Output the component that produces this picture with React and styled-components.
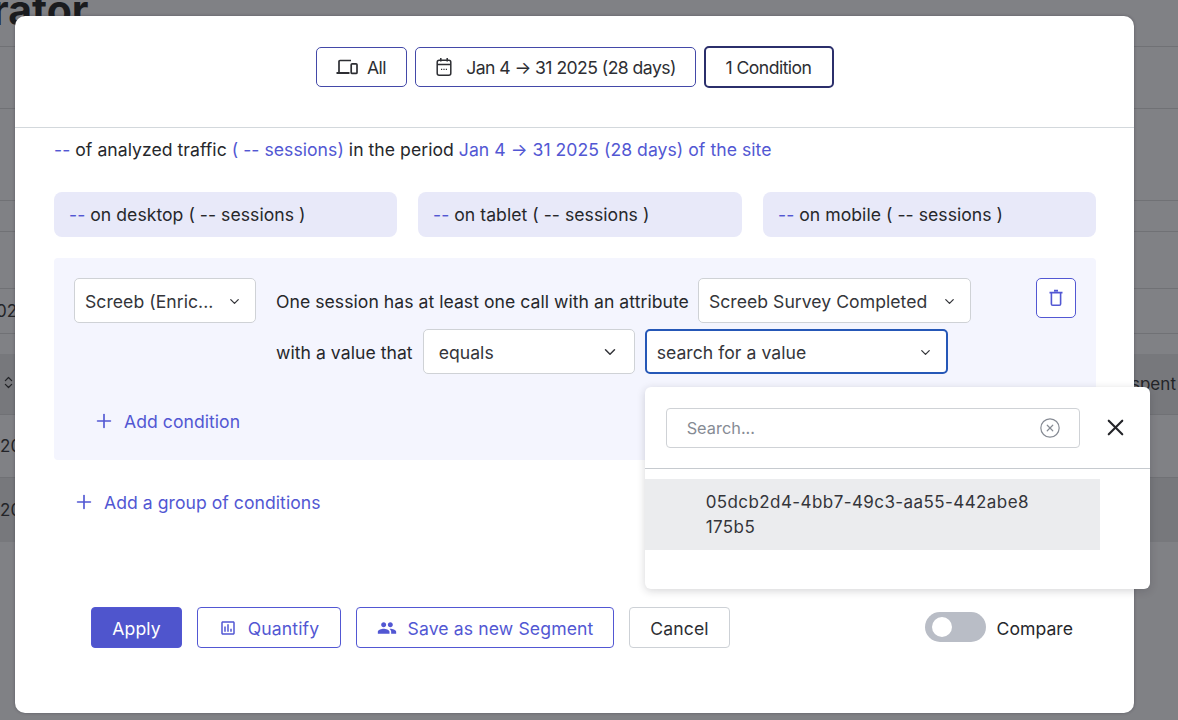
import React from "react";
import styled, { createGlobalStyle } from "styled-components";
import { ChevronDown, ChevronsUpDown, CircleX, Plus, X } from "lucide-react";
import { MdOutlineAssessment, MdPeople } from "react-icons/md";

const Global = createGlobalStyle`
  html, body {
    margin: 0;
    height: 100%;
    overflow: hidden;
    background: #808185;
    font-family: Inter, "Liberation Sans", sans-serif;
    font-size: 17.6px;
    letter-spacing: 0.04px;
    color: #26272b;
  }
  * { box-sizing: border-box; }
`;

const Page = styled.div`
  position: relative;
  width: 1178px;
  height: 720px;
  overflow: hidden;
  background: #808185;
`;

const Backdrop = styled.div`
  display: flex;
  flex-direction: column;
  height: 100%;
`;

const BackRow = styled.div`
  height: ${(p) => p.$h}px;
  flex: none;
  display: flex;
  align-items: center;
  justify-content: space-between;
  background: ${(p) => (p.$dark ? "#77787c" : "transparent")};
  border-bottom: ${(p) => (p.$plain ? "none" : "1px solid #707175")};
  font-size: 17px;
  color: #232428;
  overflow: hidden;
  white-space: nowrap;
`;

const PageTitle = styled.div`
  font-size: 41px;
  font-weight: 700;
  line-height: 1;
  margin-left: -8px;
  margin-top: -26px;
  color: #1a1b1e;
`;

const ClippedCell = styled.span`
  margin-left: ${(p) => p.$left || 0}px;
  margin-right: ${(p) => p.$right || 0}px;
`;

const Modal = styled.div`
  position: absolute;
  left: 15px;
  top: 16px;
  width: 1119px;
  height: 697px;
  background: #fff;
  border-radius: 10px;
  box-shadow: 0 0 3px rgba(40, 40, 50, 0.45);
  display: flex;
  flex-direction: column;
`;

const ModalHead = styled.div`
  height: 112px;
  flex: none;
  display: flex;
  justify-content: center;
  gap: 8px;
  padding-top: 31px;
  border-bottom: 1.5px solid #d3d8dc;
`;

const TopButton = styled.div`
  height: ${(p) => (p.$active ? 42 : 40)}px;
  margin-top: ${(p) => (p.$active ? -1 : 0)}px;
  width: ${(p) => p.$w}px;
  display: flex;
  align-items: center;
  justify-content: center;
  gap: ${(p) => p.$gap || 9}px;
  background: #fff;
  border: ${(p) => (p.$active ? "2px solid #2b2f6b" : "1px solid #4349a8")};
  border-radius: 5px;
  font-size: 17.6px;
  letter-spacing: -0.55px;
  color: #2d2e33;
`;

const ModalBody = styled.div`
  flex: 1;
  padding: 10px 38px 0 39px;
  display: flex;
  flex-direction: column;
`;

const Summary = styled.div`
  height: 24px;
  line-height: 24px;
  white-space: nowrap;
`;

const Accent = styled.span`
  color: #5257d3;
`;

const Devices = styled.div`
  display: grid;
  grid-template-columns: 343px 324px 333px;
  gap: 21px;
  margin-top: 30px;
`;

const DeviceCard = styled.div`
  height: 45px;
  display: flex;
  align-items: center;
  padding-left: 15px;
  background: #e8e9f9;
  border-radius: 8px;
  white-space: pre;
`;

const GroupPanel = styled.div`
  position: relative;
  height: 202px;
  margin-top: 21px;
  padding: 20px 20px 0;
  background: #f4f5fe;
  border-radius: 4px;
`;

const ConditionRow = styled.div`
  display: flex;
  align-items: flex-start;
`;

const ConditionLines = styled.div`
  display: flex;
  flex-direction: column;
  gap: 6px;
  margin-left: 20px;
`;

const ConditionLine = styled.div`
  display: flex;
  align-items: center;
  height: 45px;
  white-space: nowrap;
`;

const Select = styled.div`
  position: relative;
  flex: none;
  width: ${(p) => p.$w}px;
  height: 45px;
  display: flex;
  align-items: center;
  justify-content: space-between;
  padding: 1px ${(p) => p.$right || 13}px 0 ${(p) => p.$left || 10}px;
  margin-left: ${(p) => p.$gap || 0}px;
  background: #fff;
  border: ${(p) => (p.$focus ? "2px solid #2557b7" : "1px solid #cfd2d6")};
  border-radius: 5px;
  color: #34353a;
  white-space: nowrap;
`;

const LineLabel = styled.span`
  padding-top: 2px;
`;

const TrashButton = styled.div`
  flex: none;
  width: 40px;
  height: 40px;
  margin-left: 65px;
  display: flex;
  align-items: center;
  justify-content: center;
  background: #fff;
  border: 1px solid #5257d3;
  border-radius: 5px;
  color: #5257d3;
`;

const AddLink = styled.div`
  display: flex;
  align-items: center;
  gap: 9px;
  margin: ${(p) => p.$margin};
  height: 24px;
  color: #5257d3;
`;

const Footer = styled.div`
  display: flex;
  align-items: center;
  gap: 15px;
  margin-top: 93px;
  padding-left: 37px;
  padding-right: 23px;
`;

const ActionButton = styled.div`
  width: ${(p) => p.$w}px;
  height: 41px;
  display: flex;
  align-items: center;
  justify-content: center;
  gap: 11px;
  padding-top: 1px;
  border-radius: 4px;
  background: ${(p) => (p.$primary ? "#4f55cd" : "#fff")};
  color: ${(p) => (p.$primary ? "#fff" : p.$muted ? "#2d2e33" : "#5257d3")};
  border: 1px solid ${(p) => (p.$muted ? "#cdd1d6" : "#5257d3")};
  letter-spacing: 0.12px;
`;

const CompareWrap = styled.div`
  margin-left: auto;
  display: flex;
  align-items: center;
  gap: 10px;
  padding-top: 1px;
`;

const Toggle = styled.div`
  width: 61px;
  height: 30px;
  margin-bottom: 3px;
  border-radius: 15px;
  background: #b9bdc6;
  padding: 5px 0 0 7px;
`;

const ToggleKnob = styled.div`
  width: 20px;
  height: 20px;
  border-radius: 50%;
  background: #fff;
`;

const Popover = styled.div`
  position: absolute;
  left: -2px;
  top: 56px;
  width: 505px;
  height: 202px;
  background: #fff;
  border-radius: 6px;
  box-shadow: 0 2px 8px rgba(30, 30, 40, 0.18);
  z-index: 2;
  white-space: normal;
`;

const SearchBar = styled.div`
  height: 82px;
  display: flex;
  align-items: center;
  padding-left: 21px;
  border-bottom: 1px solid #c6cacf;
  color: #232428;
`;

const SearchBox = styled.div`
  width: 414px;
  height: 40px;
  display: flex;
  align-items: center;
  justify-content: space-between;
  padding: 0 18px 0 20px;
  border: 1px solid #cfd2d6;
  border-radius: 4px;
  margin-right: 22px;
  font-size: 16.3px;
  color: #868b94;
`;

const Option = styled.div`
  width: 455px;
  height: 71px;
  margin-top: 10px;
  padding: 11px 66px 0 61px;
  background: #ebecee;
  font-size: 17px;
  line-height: 25px;
  letter-spacing: 0.42px;
  word-break: break-all;
  color: #34353a;
`;

const Icon = styled.svg`
  flex: none;
  display: block;
`;

const DevicesIcon = () => (
  <Icon width="22" height="16" viewBox="0 0 22 16" fill="none" stroke="currentColor" strokeWidth="1.7">
    <path d="M15 1.5H4a1 1 0 0 0-1 1V13" />
    <path d="M0.5 14h13" strokeWidth="2" />
    <rect x="15.2" y="4.8" width="5.8" height="9.6" rx="1" />
  </Icon>
);

const CalendarIcon = () => (
  <Icon width="20" height="20" viewBox="0 0 20 20" fill="none" stroke="currentColor" strokeWidth="1.5">
    <rect x="3.2" y="3.2" width="13.6" height="15" rx="2" />
    <path d="M3.2 7.6h13.6M6.8 1v3.6M13.2 1v3.6" />
    <path d="M7 12.4h1.2M9.4 12.4h1.2M11.8 12.4h1.2" strokeWidth="1.2" />
  </Icon>
);

const TrashIcon = () => (
  <Icon width="20" height="20" viewBox="0 0 20 20" fill="none" stroke="currentColor" strokeWidth="1.6">
    <path d="M5.4 5v11a1.3 1.3 0 0 0 1.3 1.3h6.6a1.3 1.3 0 0 0 1.3-1.3V5" />
    <path d="M3.5 4.6h13M8 2.6h4" />
  </Icon>
);

export default function App() {
  return (
    <Page>
      <Global />
      <Backdrop>
        <BackRow $h={47}>
          <PageTitle>rator</PageTitle>
        </BackRow>
        <BackRow $h={62} />
        <BackRow $h={92} />
        <BackRow $h={31} />
        <BackRow $h={57} />
        <BackRow $h={45}>
          <ClippedCell $left={-4}>02</ClippedCell>
        </BackRow>
        <BackRow $h={20} $plain />
        <BackRow $h={61} $dark>
          <ClippedCell $left={1}>
            <ChevronsUpDown size={15} />
          </ClippedCell>
          <ClippedCell $right={2}>spent</ClippedCell>
        </BackRow>
        <BackRow $h={63}>
          <ClippedCell>20</ClippedCell>
        </BackRow>
        <BackRow $h={64} $dark $plain>
          <ClippedCell>20</ClippedCell>
        </BackRow>
      </Backdrop>

      <Modal>
        <ModalHead>
          <TopButton $w={91}>
            <DevicesIcon />
            All
          </TopButton>
          <TopButton $w={281} $gap={12}>
            <CalendarIcon />
            Jan 4 → 31 2025 (28 days)
          </TopButton>
          <TopButton $w={130} $active>
            1 Condition
          </TopButton>
        </ModalHead>

        <ModalBody>
          <Summary>
            <Accent>--</Accent> of analyzed traffic <Accent>( -- sessions)</Accent> in the period{" "}
            <Accent>Jan 4 → 31 2025 (28 days) of the site</Accent>
          </Summary>

          <Devices>
            <DeviceCard>
              <Accent>--</Accent> on desktop ( -- sessions )
            </DeviceCard>
            <DeviceCard>
              <Accent>--</Accent> on tablet ( -- sessions )
            </DeviceCard>
            <DeviceCard>
              <Accent>--</Accent> on mobile ( -- sessions )
            </DeviceCard>
          </Devices>

          <GroupPanel>
            <ConditionRow>
              <Select $w={182}>
                Screeb (Enric...
                <ChevronDown size={15} strokeWidth={2} />
              </Select>
              <ConditionLines>
                <ConditionLine>
                  <LineLabel>One session has at least one call with an attribute</LineLabel>
                  <Select $w={273} $gap={9}>
                    Screeb Survey Completed
                    <ChevronDown size={15} strokeWidth={2} />
                  </Select>
                </ConditionLine>
                <ConditionLine>
                  <LineLabel>with a value that</LineLabel>
                  <Select $w={212} $gap={10} $left={15} $right={15}>
                    equals
                    <ChevronDown size={18} strokeWidth={2} />
                  </Select>
                  <Select $w={303} $gap={10} $focus>
                    search for a value
                    <ChevronDown size={15} strokeWidth={2} />
                    <Popover>
                      <SearchBar>
                        <SearchBox>
                          Search...
                          <CircleX size={22} strokeWidth={1.3} />
                        </SearchBox>
                        <X size={27} strokeWidth={1.9} />
                      </SearchBar>
                      <Option>05dcb2d4-4bb7-49c3-aa55-442abe8175b5</Option>
                    </Popover>
                  </Select>
                </ConditionLine>
              </ConditionLines>
              <TrashButton>
                <TrashIcon />
              </TrashButton>
            </ConditionRow>
            <AddLink $margin="35px 0 0 19px">
              <Plus size={22} strokeWidth={1.8} />
              Add condition
            </AddLink>
          </GroupPanel>

          <AddLink $margin="30px 0 0 19px">
            <Plus size={22} strokeWidth={1.8} />
            Add a group of conditions
          </AddLink>

          <Footer>
            <ActionButton $w={91} $primary>
              Apply
            </ActionButton>
            <ActionButton $w={144}>
              <MdOutlineAssessment size={18} />
              Quantify
            </ActionButton>
            <ActionButton $w={258}>
              <MdPeople size={20} />
              Save as new Segment
            </ActionButton>
            <ActionButton $w={101} $muted>
              Cancel
            </ActionButton>
            <CompareWrap>
              <Toggle>
                <ToggleKnob />
              </Toggle>
              Compare
            </CompareWrap>
          </Footer>
        </ModalBody>
      </Modal>
    </Page>
  );
}
